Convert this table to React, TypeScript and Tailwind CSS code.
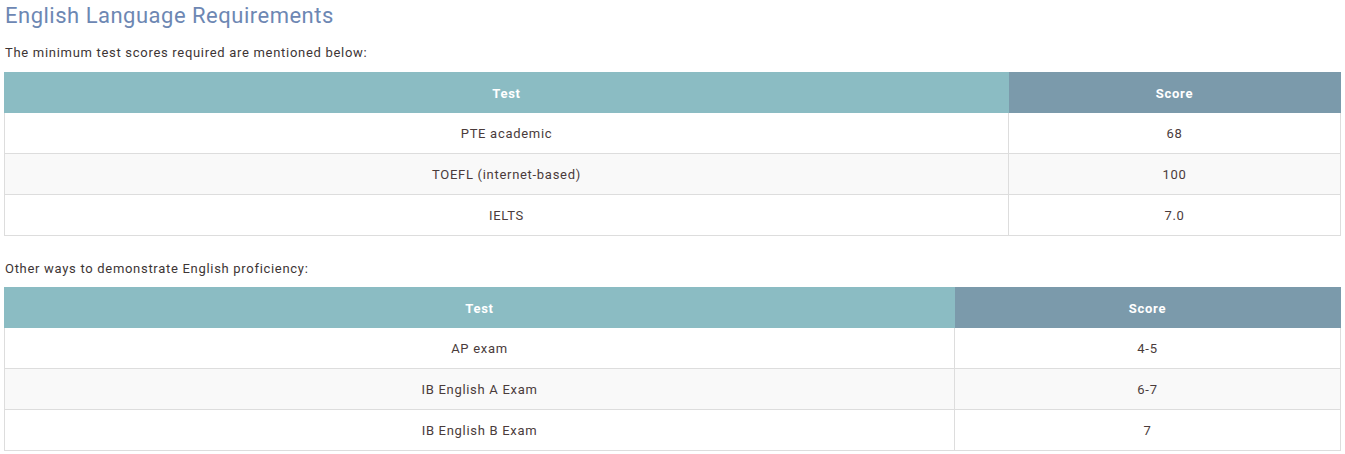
const scoreTable1 = [
  { test: 'PTE academic', score: '68' },
  { test: 'TOEFL (internet-based)', score: '100' },
  { test: 'IELTS', score: '7.0' },
]

const scoreTable2 = [
  { test: 'AP exam', score: '4-5' },
  { test: 'IB English A Exam', score: '6-7' },
  { test: 'IB English B Exam', score: '7' },
]

const ScoreTable = ({ rows, testWidth }: { rows: { test: string; score: string }[]; testWidth: string }) => (
  <table className="w-full border-collapse table-fixed text-[13px] tracking-[0.7px] text-[#4a3b3b]">
    <colgroup>
      <col className={testWidth} />
      <col />
    </colgroup>
    <thead>
      <tr className="h-[40px] text-white font-bold">
        <th className="bg-[#8bbcc3] border border-[#8bbcc3] pt-[2px]">Test</th>
        <th className="bg-[#7b9aab] border border-[#7b9aab] pt-[2px]">Score</th>
      </tr>
    </thead>
    <tbody>
      {rows.map((r, i) => (
        <tr key={r.test} className={i % 2 === 1 ? 'h-[41px] bg-[#f9f9f9]' : 'h-[41px] bg-white'}>
          <td className="border border-[#dddddd] text-center pt-[2px]">{r.test}</td>
          <td className="border border-[#dddddd] text-center pt-[2px]">{r.score}</td>
        </tr>
      ))}
    </tbody>
  </table>
)

export default function App() {
  return (
    <div className="bg-white px-[4px] pt-[2px] font-['Roboto',sans-serif]">
      <h2 className="text-[22px] leading-[28px] tracking-[0.5px] text-[#6d87b3] pl-[1px]">English Language Requirements</h2>
      <p className="mt-[15px] mb-[11px] text-[13px] leading-[16px] tracking-[0.7px] text-[#3d3535] pl-[1px]">
        The minimum test scores required are mentioned below:
      </p>
      <ScoreTable rows={scoreTable1} testWidth="w-[1004px]" />
      <p className="mt-[25px] mb-[10px] text-[13px] leading-[16px] tracking-[0.7px] text-[#3d3535] pl-[1px]">
        Other ways to demonstrate English proficiency:
      </p>
      <ScoreTable rows={scoreTable2} testWidth="w-[950px]" />
    </div>
  )
}
